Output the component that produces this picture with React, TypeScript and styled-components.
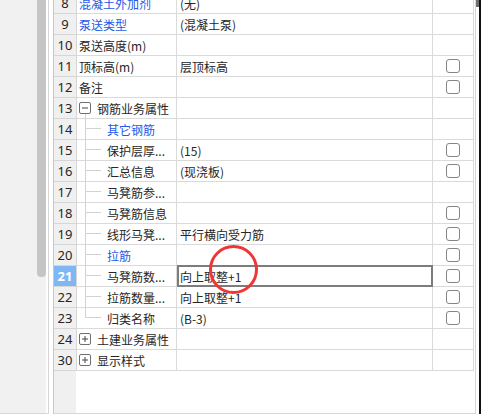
import React from "react";
import styled, { createGlobalStyle } from "styled-components";

const GlobalStyle = createGlobalStyle`
  html, body { margin: 0; padding: 0; background: #fff; }
  body { overflow: hidden; font-family: "Noto Sans CJK SC", "Noto Sans", sans-serif; }
  *, *::before, *::after { box-sizing: border-box; }
`;

type Kind = "plain" | "group" | "child";
type Row = {
  no: string;
  name: string;
  value?: string;
  kind?: Kind;
  blue?: boolean;
  check?: boolean;
  open?: boolean;
  last?: boolean;
  active?: boolean;
};

const rows: Row[] = [
  { no: "8", name: "混凝土外加剂", value: "(无)", blue: true },
  { no: "9", name: "泵送类型", value: "(混凝土泵)", blue: true },
  { no: "10", name: "泵送高度(m)" },
  { no: "11", name: "顶标高(m)", value: "层顶标高", check: true },
  { no: "12", name: "备注", check: true },
  { no: "13", name: "钢筋业务属性", kind: "group", open: true },
  { no: "14", name: "其它钢筋", kind: "child", blue: true },
  { no: "15", name: "保护层厚...", value: "(15)", kind: "child", check: true },
  { no: "16", name: "汇总信息", value: "(现浇板)", kind: "child", check: true },
  { no: "17", name: "马凳筋参...", kind: "child" },
  { no: "18", name: "马凳筋信息", kind: "child", check: true },
  { no: "19", name: "线形马凳...", value: "平行横向受力筋", kind: "child", check: true },
  { no: "20", name: "拉筋", kind: "child", blue: true, check: true },
  { no: "21", name: "马凳筋数...", value: "向上取整+1", kind: "child", check: true, active: true },
  { no: "22", name: "拉筋数量...", value: "向上取整+1", kind: "child", check: true },
  { no: "23", name: "归类名称", value: "(B-3)", kind: "child", check: true, last: true },
  { no: "24", name: "土建业务属性", kind: "group" },
  { no: "30", name: "显示样式", kind: "group" },
];

const Page = styled.div`
  display: flex;
  width: 481px;
  height: 414px;
  background: #fff;
  overflow: hidden;
`;

const SidePane = styled.div`
  display: flex;
  width: 49px;
  height: 414px;
  background: #fff;
  border-right: 1px solid #d6d6d6;
  border-bottom: 1px solid #d6d6d6;
`;

const SideFill = styled.div`
  width: 37px;
  background: #f1f1f1;
`;

const ScrollTrack = styled.div`
  width: 9px;
  background: #f1f1f1;
`;

const ScrollThumb = styled.div`
  height: 277px;
  background: #c5c5c5;
  border-radius: 0 0 4px 4px;
`;

const GridPane = styled.div`
  display: flex;
  flex-direction: column;
  width: 423px;
  height: 414px;
  margin-left: 4px;
  padding-right: 1px;
  border-left: 1px solid #c8c8c8;
  border-right: 1px solid #d6d6d6;
  border-bottom: 1px solid #d6d6d6;
  overflow: hidden;
`;

const Rows = styled.div`
  display: flex;
  flex-direction: column;
  margin-top: -7px;
`;

const GridRow = styled.div`
  display: grid;
  grid-template-columns: 23px 100px 256px 41px;
  height: 21px;
`;

const Cell = styled.div`
  position: relative;
  height: 21px;
  border-right: 1px solid #dadada;
  border-bottom: 1px solid #dadada;
  display: flex;
  align-items: center;
  white-space: nowrap;
  font-size: 12px;
  color: #262626;
`;

const NumCell = styled(Cell)<{ $active?: boolean }>`
  justify-content: center;
  font-family: "Noto Sans", "Noto Sans CJK SC", sans-serif;
  font-size: 13px;
  background: ${(p) => (p.$active ? "#7fb7f5" : "#f0f0f0")};
  color: ${(p) => (p.$active ? "#fff" : "#262626")};
  font-weight: ${(p) => (p.$active ? 700 : 400)};
  border-color: #d6d6d6;
`;

const NameCell = styled(Cell)<{ $blue?: boolean }>`
  padding-left: 2px;
  color: ${(p) => (p.$blue ? "#2457e6" : "#262626")};
`;

const ValueCell = styled(Cell)<{ $editing?: boolean }>`
  padding-left: 3px;
  &::after {
    content: "";
    display: ${(p) => (p.$editing ? "block" : "none")};
    position: absolute;
    top: -1px;
    left: 0;
    right: -1px;
    bottom: -1px;
    border: 2px solid #7c7c7c;
    pointer-events: none;
  }
`;

const CheckCell = styled(Cell)`
  justify-content: center;
`;

const CheckBox = styled.span`
  width: 14px;
  height: 14px;
  border: 1px solid #858585;
  border-radius: 3px;
  background: #fff;
`;

const Guide = styled.span<{ $last?: boolean }>`
  position: relative;
  flex-shrink: 0;
  width: 28px;
  height: 20px;
  &::before {
    content: "";
    position: absolute;
    left: 6px;
    top: 0;
    width: 1px;
    height: ${(p) => (p.$last ? "10px" : "21px")};
    background: #d2d2d2;
  }
  &::after {
    content: "";
    position: absolute;
    left: 7px;
    top: 9px;
    width: 15px;
    height: 1px;
    background: #d2d2d2;
  }
`;

const Expander = styled.span<{ $open?: boolean }>`
  position: relative;
  flex-shrink: 0;
  display: flex;
  align-items: center;
  justify-content: center;
  width: 12px;
  height: 12px;
  margin-right: 6px;
  border: 1px solid #6f6f6f;
  border-radius: 2px;
  background: #fff;
  &::after {
    content: "";
    display: ${(p) => (p.$open ? "block" : "none")};
    position: absolute;
    left: 5px;
    top: calc(100% + 1px);
    width: 1px;
    height: 5px;
    background: #d2d2d2;
  }
`;

const Circle = styled.span`
  position: absolute;
  left: 32px;
  top: -21px;
  width: 49px;
  height: 49px;
  border: 3px solid #ef3535;
  border-radius: 50%;
  z-index: 3;
  pointer-events: none;
`;

const Filler = styled.div`
  flex: 1;
  display: flex;
`;

const NumFill = styled.div`
  width: 22px;
  background: #f0f0f0;
`;

const RightEdge = styled.div`
  display: flex;
  width: 5px;
  height: 414px;
`;

const EdgeGap = styled.div`
  width: 3px;
  background: #fff;
`;

const EdgeThumb = styled.div`
  height: 7px;
  background: #6e6e6e;
`;

const EdgeBar = styled.div`
  width: 2px;
  background: #111;
`;

function Sign({ open }: { open?: boolean }) {
  return (
    <svg width="8" height="8" viewBox="0 0 8 8">
      <line x1="1" y1="4" x2="7" y2="4" stroke="#444" strokeWidth="1" />
      {!open && <line x1="4" y1="1" x2="4" y2="7" stroke="#444" strokeWidth="1" />}
    </svg>
  );
}

export default function App() {
  return (
    <>
      <GlobalStyle />
      <Page>
        <SidePane>
          <SideFill />
          <ScrollTrack>
            <ScrollThumb />
          </ScrollTrack>
        </SidePane>
        <GridPane>
          <Rows>
            {rows.map((r) => (
              <GridRow key={r.no}>
                <NumCell $active={r.active}>{r.no}</NumCell>
                <NameCell $blue={r.blue}>
                  {r.kind === "group" && (
                    <Expander $open={r.open}>
                      <Sign open={r.open} />
                    </Expander>
                  )}
                  {r.kind === "child" && <Guide $last={r.last} />}
                  {r.name}
                </NameCell>
                <ValueCell $editing={r.active}>
                  {r.value}
                  {r.active && <Circle />}
                </ValueCell>
                <CheckCell>{r.check && <CheckBox />}</CheckCell>
              </GridRow>
            ))}
          </Rows>
          <Filler>
            <NumFill />
          </Filler>
        </GridPane>
        <RightEdge>
          <EdgeGap>
            <EdgeThumb />
          </EdgeGap>
          <EdgeBar />
        </RightEdge>
      </Page>
    </>
  );
}
